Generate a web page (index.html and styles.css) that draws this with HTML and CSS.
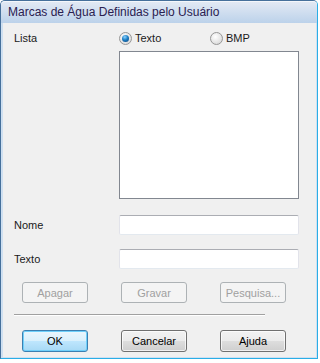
FILE: index.html
```html
<!DOCTYPE html>
<html lang="pt">
<head>
  <meta charset="UTF-8">
  <title>Marcas de Água Definidas pelo Usuário</title>
  <link rel="stylesheet" href="styles.css">
</head>
<body>
  <div class="window">
    <div class="titlebar">Marcas de Água Definidas pelo Usuário</div>
    <div class="client">
      <div class="row row-radios">
        <span class="label">Lista</span>
        <div class="radios">
          <label class="radio checked"><span class="dot"></span>Texto</label>
          <label class="radio"><span class="dot"></span>BMP</label>
        </div>
      </div>
      <div class="row row-list">
        <span class="label"></span>
        <div class="listbox"></div>
      </div>
      <div class="row row-name">
        <span class="label">Nome</span>
        <div class="textbox"></div>
      </div>
      <div class="row row-text">
        <span class="label">Texto</span>
        <div class="textbox"></div>
      </div>
      <div class="buttons buttons-top">
        <button class="btn" disabled>Apagar</button>
        <button class="btn" disabled>Gravar</button>
        <button class="btn" disabled>Pesquisa...</button>
      </div>
      <div class="separator"></div>
      <div class="buttons buttons-bottom">
        <button class="btn default">OK</button>
        <button class="btn">Cancelar</button>
        <button class="btn">Ajuda</button>
      </div>
    </div>
  </div>
</body>
</html>
```

FILE: styles.css
```css
* {
  box-sizing: border-box;
  margin: 0;
  padding: 0;
}

body {
  background: #fff;
  font-family: "Liberation Sans", Arial, sans-serif;
  font-size: 11px;
  color: #1a1a1a;
}

.window {
  width: 318px;
  height: 359px;
  border: 1px solid #46709b;
  border-right-color: #2aaee6;
  border-bottom-color: #2aaee6;
  border-radius: 5px 5px 0 0;
  background: #cfe0f1;
  padding: 0 1px 1px 2px;
  display: flex;
  flex-direction: column;
}

.titlebar {
  height: 22px;
  padding: 3px 0 0 7px;
  font-size: 12px;
  color: #2a2050;
  background: linear-gradient(#e2e9f4, #bcd2ea);
  margin: 0 -1px 0 -2px;
  border-radius: 4px 4px 0 0;
  border-top: 1px solid #f4f7fb;
}

.client {
  flex: 1;
  background: #f0f0f0;
  padding: 8px 0 0 11px;
}

.row {
  display: flex;
  align-items: center;
}

.label {
  width: 105px;
  flex-shrink: 0;
}

.row-radios {
  height: 14px;
}

.radios {
  display: flex;
}

.radio {
  display: flex;
  align-items: center;
  gap: 3px;
  width: 91px;
}

.dot {
  width: 13px;
  height: 13px;
  border-radius: 50%;
  border: 1px solid #979797;
  background: radial-gradient(circle at 40% 35%, #ffffff 0%, #e6e6e6 55%, #cfcfcf 100%);
  position: relative;
}

.radio.checked .dot::after {
  content: "";
  position: absolute;
  left: 2px;
  top: 2px;
  width: 7px;
  height: 7px;
  border-radius: 50%;
  background: radial-gradient(circle at 40% 30%, #8fd3ff 0%, #1d7fc4 45%, #0a3f7a 100%);
}

.row-list {
  margin-top: 6px;
}

.listbox {
  width: 180px;
  height: 148px;
  background: #fff;
  border: 1px solid #828790;
}

.row-name {
  margin-top: 16px;
}

.row-text {
  margin-top: 14px;
}

.textbox {
  width: 180px;
  height: 20px;
  background: #fff;
  border: 1px solid #e2e3ea;
  border-top-color: #abadb3;
  border-bottom-color: #e3e9ef;
  border-radius: 2px;
}

.buttons {
  display: flex;
  gap: 33px;
  padding-left: 8px;
}

.buttons-top {
  margin-top: 13px;
}

.btn {
  width: 66px;
  height: 21px;
  font-family: inherit;
  font-size: 11px;
  color: #000;
  border: 1px solid #707070;
  border-radius: 3px;
  background: linear-gradient(#f2f2f2 0%, #ebebeb 50%, #dddddd 51%, #cfcfcf 100%);
  box-shadow: inset 0 0 0 1px rgba(255, 255, 255, 0.7);
}

.btn:disabled {
  color: #a0a0a0;
  border-color: #adb2b5;
  background: #f4f4f4;
  box-shadow: none;
}

.separator {
  width: 251px;
  margin-top: 11px;
  border-top: 1px solid #a0a0a0;
  border-bottom: 1px solid #fff;
}

.buttons-bottom {
  margin-top: 14px;
}

.buttons-bottom .btn {
  height: 22px;
}

.btn.default {
  border-color: #3c7fb1;
  background: linear-gradient(#eaf6fd 0%, #d9f0fc 50%, #bee6fd 51%, #a7d9f5 100%);
  box-shadow: inset 0 0 0 1px #6fd0fb;
}
```
